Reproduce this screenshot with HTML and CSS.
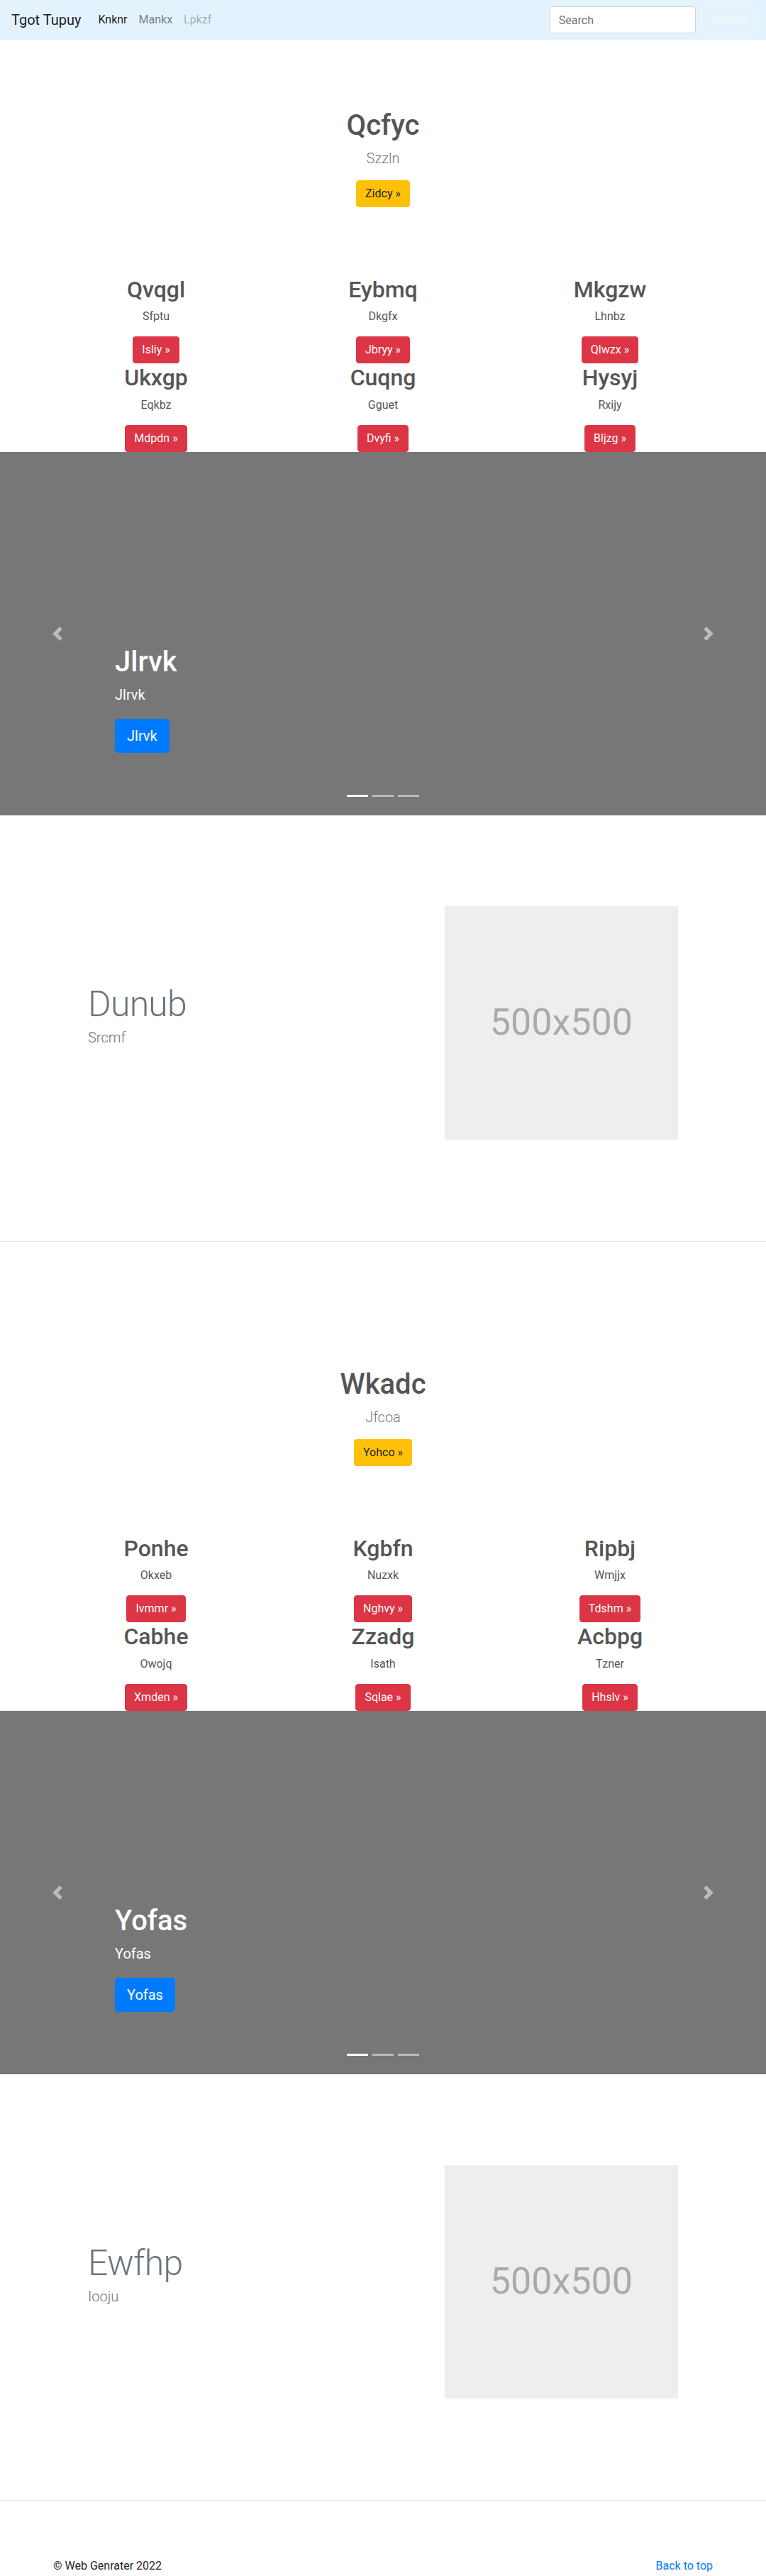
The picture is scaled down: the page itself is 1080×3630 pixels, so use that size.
FILE: index.html
```html
<!DOCTYPE html>
<html lang="en">
<head>
<meta charset="utf-8">
<title>Tgot Tupuy</title>
<link rel="stylesheet" href="styles.css">
</head>
<body>
<header class="navbar">
  <div class="nav-left">
    <a class="brand" href="#">Tgot Tupuy</a>
    <ul class="nav">
      <li><a class="nav-link active" href="#">Knknr</a></li>
      <li><a class="nav-link" href="#">Mankx</a></li>
      <li><a class="nav-link disabled" href="#">Lpkzf</a></li>
    </ul>
  </div>
  <form class="search">
    <input class="search-input" type="text" placeholder="Search">
    <button class="btn btn-outline-light" type="button">Search</button>
  </form>
</header>

<main>
  <section class="block">
    <div class="hero">
      <h1 class="hero-title">Qcfyc</h1>
      <p class="lead">Szzln</p>
      <a class="btn btn-warning" href="#">Zidcy &raquo;</a>
    </div>
    <div class="grid">
      <div class="cell"><h2 class="cell-title">Qvqgl</h2><p class="cell-text">Sfptu</p><a class="btn btn-danger" href="#">Isliy &raquo;</a></div>
      <div class="cell"><h2 class="cell-title">Eybmq</h2><p class="cell-text">Dkgfx</p><a class="btn btn-danger" href="#">Jbryy &raquo;</a></div>
      <div class="cell"><h2 class="cell-title">Mkgzw</h2><p class="cell-text">Lhnbz</p><a class="btn btn-danger" href="#">Qlwzx &raquo;</a></div>
      <div class="cell"><h2 class="cell-title">Ukxgp</h2><p class="cell-text">Eqkbz</p><a class="btn btn-danger" href="#">Mdpdn &raquo;</a></div>
      <div class="cell"><h2 class="cell-title">Cuqng</h2><p class="cell-text">Gguet</p><a class="btn btn-danger" href="#">Dvyfi &raquo;</a></div>
      <div class="cell"><h2 class="cell-title">Hysyj</h2><p class="cell-text">Rxijy</p><a class="btn btn-danger" href="#">Bljzg &raquo;</a></div>
    </div>
    <div class="carousel">
      <ol class="indicators"><li class="active"></li><li></li><li></li></ol>
      <div class="caption">
        <h1 class="caption-title">Jlrvk</h1>
        <p class="caption-text">Jlrvk</p>
        <a class="btn btn-lg btn-primary" href="#">Jlrvk</a>
      </div>
      <a class="control control-prev" href="#"><svg viewBox="0 0 8 8"><path fill="#fff" d="M5.25 0l-4 4 4 4 1.5-1.5L4.25 4l2.5-2.5L5.25 0z"/></svg></a>
      <a class="control control-next" href="#"><svg viewBox="0 0 8 8"><path fill="#fff" d="M2.75 0l-1.5 1.5L3.75 4l-2.5 2.5L2.75 8l4-4-4-4z"/></svg></a>
    </div>
    <div class="featurette">
      <div class="feat-row">
        <div class="feat-text">
          <h2 class="feat-title">Dunub</h2>
          <p class="feat-lead">Srcmf</p>
        </div>
        <div class="feat-media"><div class="placeholder">500x500</div></div>
      </div>
    </div>
    <hr class="divider">
  </section>

  <section class="block">
    <div class="hero">
      <h1 class="hero-title">Wkadc</h1>
      <p class="lead">Jfcoa</p>
      <a class="btn btn-warning" href="#">Yohco &raquo;</a>
    </div>
    <div class="grid">
      <div class="cell"><h2 class="cell-title">Ponhe</h2><p class="cell-text">Okxeb</p><a class="btn btn-danger" href="#">Ivmmr &raquo;</a></div>
      <div class="cell"><h2 class="cell-title">Kgbfn</h2><p class="cell-text">Nuzxk</p><a class="btn btn-danger" href="#">Nghvy &raquo;</a></div>
      <div class="cell"><h2 class="cell-title">Ripbj</h2><p class="cell-text">Wmjjx</p><a class="btn btn-danger" href="#">Tdshm &raquo;</a></div>
      <div class="cell"><h2 class="cell-title">Cabhe</h2><p class="cell-text">Owojq</p><a class="btn btn-danger" href="#">Xmden &raquo;</a></div>
      <div class="cell"><h2 class="cell-title">Zzadg</h2><p class="cell-text">Isath</p><a class="btn btn-danger" href="#">Sqlae &raquo;</a></div>
      <div class="cell"><h2 class="cell-title">Acbpg</h2><p class="cell-text">Tzner</p><a class="btn btn-danger" href="#">Hhslv &raquo;</a></div>
    </div>
    <div class="carousel">
      <ol class="indicators"><li class="active"></li><li></li><li></li></ol>
      <div class="caption">
        <h1 class="caption-title">Yofas</h1>
        <p class="caption-text">Yofas</p>
        <a class="btn btn-lg btn-primary" href="#">Yofas</a>
      </div>
      <a class="control control-prev" href="#"><svg viewBox="0 0 8 8"><path fill="#fff" d="M5.25 0l-4 4 4 4 1.5-1.5L4.25 4l2.5-2.5L5.25 0z"/></svg></a>
      <a class="control control-next" href="#"><svg viewBox="0 0 8 8"><path fill="#fff" d="M2.75 0l-1.5 1.5L3.75 4l-2.5 2.5L2.75 8l4-4-4-4z"/></svg></a>
    </div>
    <div class="featurette">
      <div class="feat-row">
        <div class="feat-text">
          <h2 class="feat-title">Ewfhp</h2>
          <p class="feat-lead">Iooju</p>
        </div>
        <div class="feat-media"><div class="placeholder">500x500</div></div>
      </div>
    </div>
    <hr class="divider">
  </section>
</main>

<footer class="footer">
  <p>&copy; Web Genrater 2022</p>
  <p><a href="#">Back to top</a></p>
</footer>
</body>
</html>
```

FILE: styles.css
```css
* { box-sizing: border-box; }

body {
  margin: 0;
  font-family: Roboto, "Segoe UI", "Liberation Sans", sans-serif;
  font-size: 16px;
  line-height: 1.5;
  color: #212529;
  background: #fff;
}

/* Navbar */
.navbar {
  display: flex;
  align-items: center;
  justify-content: space-between;
  height: 56px;
  padding: 8px 16px;
  background: #e3f2fd;
}
.nav-left { display: flex; align-items: center; }
.brand {
  font-size: 20px;
  line-height: 30px;
  padding: 5px 0;
  margin-right: 16px;
  color: rgba(0, 0, 0, .9);
  text-decoration: none;
}
.nav { display: flex; list-style: none; margin: 0; padding: 0; }
.nav-link {
  display: block;
  padding: 8px;
  color: rgba(0, 0, 0, .5);
  text-decoration: none;
}
.nav-link.active { color: rgba(0, 0, 0, .9); }
.nav-link.disabled { color: rgba(0, 0, 0, .3); }

.search { display: flex; align-items: center; margin: 0; }
.search-input {
  width: 206px;
  height: 38px;
  margin-right: 8px;
  padding: 6px 12px;
  font-family: inherit;
  font-size: 16px;
  color: #495057;
  background: #fff;
  border: 1px solid #ced4da;
  border-radius: 4px;
}
.search-input::placeholder { color: #6c757d; }

/* Buttons */
.btn {
  display: inline-block;
  padding: 6px 12px;
  font-family: inherit;
  font-size: 16px;
  line-height: 24px;
  border: 1px solid transparent;
  border-radius: 4px;
  text-decoration: none;
  white-space: nowrap;
}
.btn-outline-light { color: #f8f9fa; background: transparent; border-color: #f8f9fa; }
.btn-warning { color: #212529; background: #ffc107; border-color: #ffc107; }
.btn-danger { color: #fff; background: #dc3545; border-color: #dc3545; }
.btn-primary { color: #fff; background: #007bff; border-color: #007bff; }
.btn-lg { padding: 8px 16px; font-size: 20px; line-height: 30px; border-radius: 4.8px; }

/* Hero */
.hero {
  display: flex;
  flex-direction: column;
  align-items: center;
  padding: 96px 0;
  text-align: center;
}
.hero-title {
  margin: 0 0 8px;
  padding-top: 2px;
  font-size: 40px;
  line-height: 46px;
  font-weight: 500;
  color: #555;
}
.lead {
  margin: 0 0 16px;
  font-size: 20px;
  line-height: 30px;
  font-weight: 300;
  color: #777;
}

/* Grid of small cards */
.grid {
  width: 960px;
  margin: 0 auto;
  display: grid;
  grid-template-columns: repeat(3, 1fr);
}
.cell {
  display: flex;
  flex-direction: column;
  align-items: center;
  padding: 0 15px;
  text-align: center;
}
.cell-title {
  margin: 0 0 8px;
  padding-top: 2px;
  font-size: 32px;
  line-height: 36.4px;
  font-weight: 500;
  color: #555;
}
.cell-text { margin: 0 0 16px; color: #555; }

/* Carousel */
.carousel {
  position: relative;
  height: 512px;
  background: #777;
  overflow: hidden;
}
.caption {
  position: absolute;
  left: 15%;
  right: 15%;
  bottom: 88px;
  display: flex;
  flex-direction: column;
  align-items: flex-start;
  color: #fff;
}
.caption-title {
  margin: 0 0 8px;
  padding-top: 2px;
  font-size: 40px;
  line-height: 46px;
  font-weight: 500;
}
.caption-text { margin: 0 0 19px; font-size: 20px; line-height: 30px; }
.control {
  position: absolute;
  top: 0;
  bottom: 0;
  width: 15%;
  display: flex;
  align-items: center;
  justify-content: center;
  opacity: .5;
}
.control-prev { left: 0; }
.control-next { right: 0; }
.control svg { width: 20px; height: 20px; display: block; }
.indicators {
  position: absolute;
  left: 0;
  right: 0;
  bottom: 16px;
  display: flex;
  justify-content: center;
  margin: 0;
  padding: 0;
  list-style: none;
}
.indicators li {
  width: 30px;
  height: 3px;
  margin: 10px 3px;
  background: #fff;
  opacity: .5;
}
.indicators li.active { opacity: 1; }

/* Featurette */
.featurette { padding: 128px 0 143px; }
.feat-row {
  width: 862px;
  margin: 0 auto;
  display: flex;
  align-items: center;
}
.feat-text { flex: 0 0 58.3333%; padding: 0 15px; }
.feat-media { flex: 0 0 41.6667%; padding: 0 15px; }
.feat-title {
  margin: 0 0 8px;
  padding-top: 3px;
  height: 50px;
  font-size: 50px;
  line-height: 47px;
  font-weight: 300;
  letter-spacing: -0.8px;
  color: #6c757d;
}
.feat-lead {
  margin: 0 0 16px;
  font-size: 20px;
  line-height: 30px;
  font-weight: 300;
  color: #6c757d;
}
.placeholder {
  width: 100%;
  aspect-ratio: 1 / 1;
  display: flex;
  align-items: center;
  justify-content: center;
  background: #eee;
  color: #aaa;
  font-size: 52px;
}

.divider {
  height: 1px;
  margin: 0 0 80px;
  border: 0;
  background: rgba(0, 0, 0, .1);
}

/* Footer */
.footer {
  width: 960px;
  margin: 0 auto;
  padding: 0 15px;
  display: flex;
  justify-content: space-between;
}
.footer p { margin: 0 0 16px; }
.footer a { color: #007bff; text-decoration: none; }
```
